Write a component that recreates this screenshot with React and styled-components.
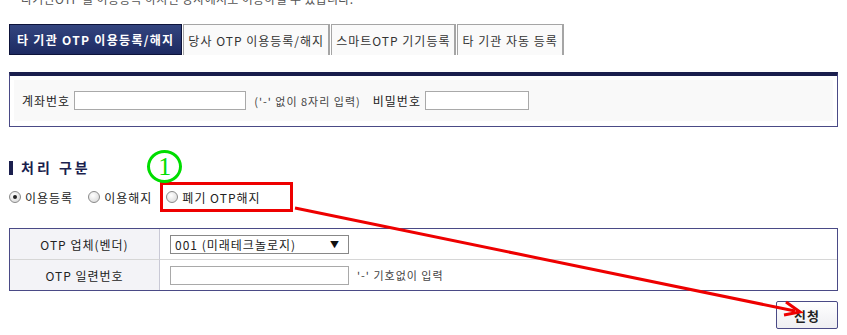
import React from 'react';
import styled, { createGlobalStyle } from 'styled-components';

const GlobalStyle = createGlobalStyle`
  body {
    margin: 0;
    background: #ffffff;
    font-family: "Noto Sans CJK KR", "Liberation Sans", sans-serif;
    font-size: 12px;
    letter-spacing: 1px;
    color: #333333;
  }
`;

const Page = styled.div`
  position: relative;
  width: 847px;
  height: 335px;
  overflow: hidden;
  padding: 0 9px;
  box-sizing: border-box;
`;

const CutLine = styled.div`
  height: 5px;
  overflow: hidden;
  padding-left: 12px;
  color: #555555;
  font-size: 12px;
  line-height: 12px;
`;

const CutText = styled.div`
  margin-top: -7px;
  letter-spacing: 0.3px;
`;

const Tabs = styled.div`
  display: flex;
  margin-top: 19px;
  height: 31px;
`;

const Tab = styled.div`
  display: flex;
  align-items: center;
  padding: 0 ${p => (p.$active ? '7px' : '4px')};
  margin-right: 1px;
  box-sizing: border-box;
  white-space: nowrap;
  font-size: 12px;
  ${p => p.$active ? `
    background: linear-gradient(#33457f, #1d2a62);
    border: 1px solid #0d133a;
    color: #ffffff;
    font-weight: bold;
    letter-spacing: 1.3px;
  ` : `
    background: #fafafa;
    border: 1px solid #a5a5a5;
    border-bottom: none;
    border-right-width: 2px;
    color: #333333;
  `}
`;

const SearchBox = styled.div`
  margin-top: 17px;
  height: 55px;
  box-sizing: border-box;
  border: 1px solid #4a4a86;
  border-top: 4px solid #1b1f4e;
  padding: 4px 4px 5px;
`;

const SearchInner = styled.div`
  height: 100%;
  background: #f9f9f9;
  display: flex;
  align-items: center;
  padding-left: 8px;
  gap: 4px;
`;

const Label = styled.span`
  font-size: 12px;
  color: #222222;
  white-space: nowrap;
`;

const Hint = styled.span`
  font-size: 11px;
  color: #444444;
  margin: 0 ${p => p.$after || 0}px 0 ${p => p.$before || 0}px;
  white-space: nowrap;
`;

const TextInput = styled.div`
  width: ${p => p.$w}px;
  height: 19px;
  box-sizing: border-box;
  border: 1px solid #a9a9a9;
  background: #ffffff;
`;

const SectionTitle = styled.h3`
  margin: 33px 0 0;
  display: flex;
  align-items: center;
  gap: 8px;
  font-size: 14px;
  font-weight: bold;
  color: #1b1f4e;
  line-height: 15px;
  letter-spacing: 3px;
`;

const TitleBar = styled.span`
  width: 4px;
  height: 14px;
  background: #1b1f4e;
`;

const RadioRow = styled.div`
  display: flex;
  align-items: center;
  margin-top: 7px;
  height: 30px;
`;

const RadioItem = styled.label`
  display: inline-flex;
  align-items: center;
  gap: 4px;
  margin-right: ${p => p.$mr || 0}px;
  font-size: 12px;
  color: #222222;
  white-space: nowrap;
`;

const Highlight = styled.div`
  position: relative;
  display: flex;
  align-items: center;
  width: 133px;
  height: 30px;
  box-sizing: border-box;
  border: 3px solid #ee0000;
  padding-left: 3px;
`;

const CircledNum = styled.span`
  position: absolute;
  left: -16px;
  top: -35px;
  width: 35px;
  height: 33px;
  box-sizing: border-box;
  border: 3px solid #00dd00;
  border-radius: 50%;
  display: flex;
  align-items: center;
  justify-content: center;
  font-family: "Liberation Serif", serif;
  font-size: 26px;
  line-height: 26px;
  letter-spacing: 0;
  color: #00dd00;
`;

const Radio = styled.span`
  width: 12px;
  height: 12px;
  box-sizing: border-box;
  border-radius: 50%;
  border: 1px solid #8a8a8a;
  background: radial-gradient(circle at 40% 35%, #ffffff, #d4d4d4);
  display: flex;
  align-items: center;
  justify-content: center;
  &::after {
    content: '';
    width: 4px;
    height: 4px;
    border-radius: 50%;
    background: ${p => (p.$checked ? '#222222' : 'transparent')};
  }
`;

const Table = styled.div`
  margin-top: 16px;
  border: 1px solid #4a4a86;
  display: grid;
  grid-template-columns: 150px 1fr;
`;

const HeadCell = styled.div`
  height: 30px;
  background: #f3f3f7;
  border-right: 1px solid #c9c9d6;
  border-top: ${p => (p.$first ? 'none' : '1px solid #d6d6d6')};
  display: flex;
  align-items: center;
  justify-content: center;
  font-size: 12px;
  color: #222222;
`;

const BodyCell = styled.div`
  height: 30px;
  border-top: ${p => (p.$first ? 'none' : '1px solid #d6d6d6')};
  display: flex;
  align-items: center;
  padding-left: 10px;
  gap: 8px;
`;

const Select = styled.div`
  width: 179px;
  height: 19px;
  box-sizing: border-box;
  border: 1px solid #888888;
  background: #ffffff;
  display: flex;
  align-items: center;
  justify-content: space-between;
  padding: 0 8px 0 4px;
  font-size: 12px;
  color: #222222;
`;

const Caret = styled.span`
  font-size: 9px;
  color: #111111;
`;

const Footer = styled.div`
  display: flex;
  justify-content: flex-end;
  margin-top: 10px;
`;

const SubmitButton = styled.button`
  width: 62px;
  height: 28px;
  border: 1px solid #4a4a86;
  border-radius: 2px;
  background: linear-gradient(#ffffff, #eeeef2);
  font-family: "Noto Sans CJK KR", sans-serif;
  font-size: 13px;
  font-weight: bold;
  letter-spacing: 1px;
  color: #222222;
`;

const Arrow = styled.svg`
  position: absolute;
  left: 0;
  top: 0;
  pointer-events: none;
`;

export default function App() {
  return (
    <Page>
      <GlobalStyle />
      <CutLine>
        <CutText>타기관OTP 를 이용등록 하시면 당사에서도 이용하실 수 있습니다.</CutText>
      </CutLine>

      <Tabs>
        <Tab $active>타 기관 OTP 이용등록/해지</Tab>
        <Tab>당사 OTP 이용등록/해지</Tab>
        <Tab>스마트OTP 기기등록</Tab>
        <Tab>타 기관 자동 등록</Tab>
      </Tabs>

      <SearchBox>
        <SearchInner>
          <Label>계좌번호</Label>
          <TextInput $w={172} />
          <Hint $before={4} $after={8}>('-' 없이 8자리 입력)</Hint>
          <Label>비밀번호</Label>
          <TextInput $w={104} />
        </SearchInner>
      </SearchBox>

      <SectionTitle>
        <TitleBar />
        처리 구분
      </SectionTitle>

      <RadioRow>
        <RadioItem $mr={15}>
          <Radio $checked />
          이용등록
        </RadioItem>
        <RadioItem $mr={8}>
          <Radio />
          이용해지
        </RadioItem>
        <Highlight>
          <CircledNum>1</CircledNum>
          <RadioItem>
            <Radio />
            폐기 OTP해지
          </RadioItem>
        </Highlight>
      </RadioRow>

      <Table>
        <HeadCell $first>OTP 업체(벤더)</HeadCell>
        <BodyCell $first>
          <Select>
            001 (미래테크놀로지)
            <Caret>▼</Caret>
          </Select>
        </BodyCell>
        <HeadCell>OTP 일련번호</HeadCell>
        <BodyCell>
          <TextInput $w={179} />
          <Hint>'-' 기호없이 입력</Hint>
        </BodyCell>
      </Table>

      <Footer>
        <SubmitButton>신청</SubmitButton>
      </Footer>

      <Arrow width="847" height="335">
        <line x1="295" y1="208" x2="795" y2="311" stroke="#ee0000" strokeWidth="3" />
        <path d="M786 302 L800 312 L784 315" fill="none" stroke="#ee0000" strokeWidth="3" />
      </Arrow>
    </Page>
  );
}
